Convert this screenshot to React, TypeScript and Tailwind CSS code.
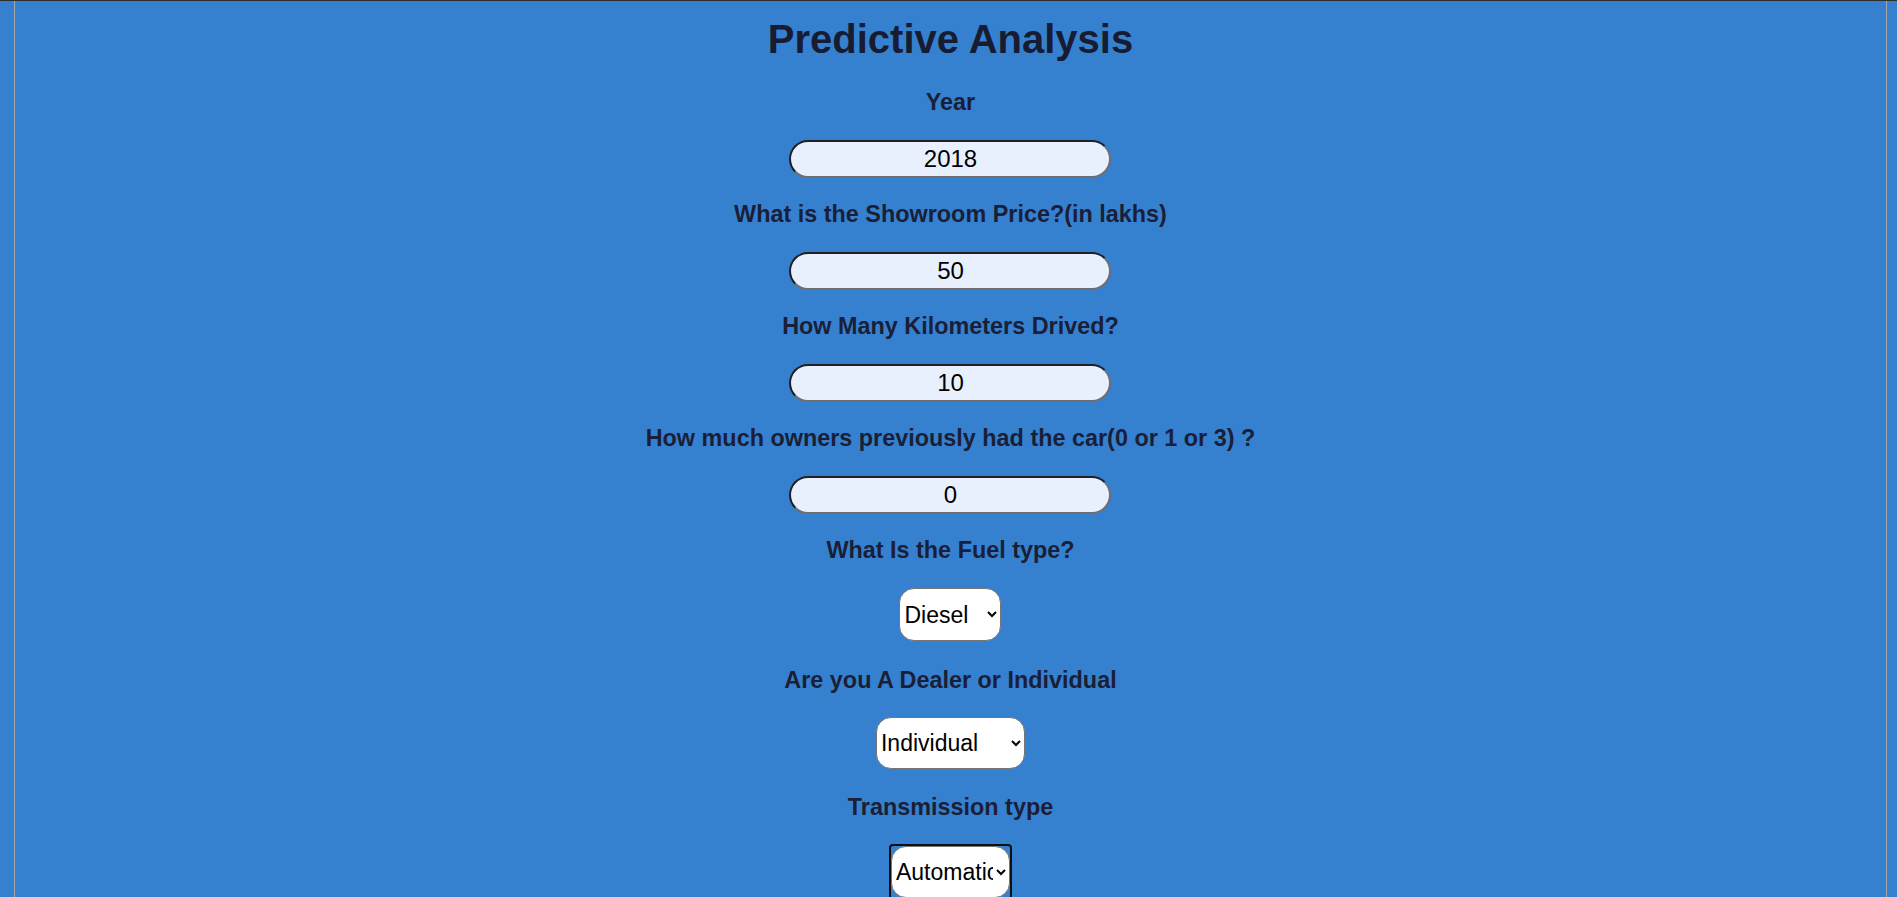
import React from "react";

const font = { fontFamily: '"Liberation Sans", Arial, sans-serif' };

const inputs = [
  { label: "Year", value: "2018" },
  { label: "What is the Showroom Price?(in lakhs)", value: "50" },
  { label: "How Many Kilometers Drived?", value: "10" },
  { label: "How much owners previously had the car(0 or 1 or 3) ?", value: "0" },
];

const Label = ({ children, className = "mt-[22.5px]" }: { children: React.ReactNode; className?: string }) => (
  <label className={`${className} block text-[23.4px] leading-[27px] font-bold text-[#1a1e36]`}>
    {children}
  </label>
);

const App = () => {
  return (
    <div className="min-h-screen bg-[#3581cf] border-t border-[#2e2e2e]" style={font}>
      <div className="ml-[14px] w-[1873px] min-h-[896px] border-x border-[#a8a8a8] flex flex-col items-center pb-10">
        {/* heading */}
        <h1 className="mt-[15px] text-[40px] leading-[46px] font-bold text-[#171c33]">
          Predictive Analysis
        </h1>

        <div className="mt-[4px] flex flex-col items-center">
          {/* number inputs */}
          {inputs.map((item) => (
            <React.Fragment key={item.label}>
              <Label>{item.label}</Label>
              <input
                type="text"
                defaultValue={item.value}
                className="mt-[24.5px] w-[322px] h-[38px] rounded-full border-2 border-t-[#202020] border-l-[#202020] border-b-[#6e6e6e] border-r-[#6e6e6e] bg-[#e8f0fe] text-center text-[24px] text-black outline-none"
                style={font}
              />
            </React.Fragment>
          ))}

          {/* fuel type */}
          <Label>What Is the Fuel type?</Label>
          <select
            defaultValue="Diesel"
            className="mt-[24.5px] w-[102px] h-[53px] rounded-[15px] border border-[#767676] bg-white pl-0 text-[23px] text-black"
            style={font}
          >
            <option>Petrol</option>
            <option>Diesel</option>
            <option>CNG</option>
          </select>

          {/* seller type */}
          <Label className="mt-[25.5px]">Are you A Dealer or Individual</Label>
          <select
            defaultValue="Individual"
            className="mt-[23px] w-[149px] h-[52px] rounded-[15px] border border-[#767676] bg-white pl-0 text-[23px] text-black"
            style={font}
          >
            <option>Dealer</option>
            <option>Individual</option>
          </select>

          {/* transmission */}
          <Label className="mt-[25px]">Transmission type</Label>
          <div className="mt-[23px] rounded-[4px] border-2 border-[#101010]">
            <select
              defaultValue="Automatic"
              className="block w-[119px] h-[52px] rounded-[15px] border border-[#767676] bg-white pl-0 text-[23px] text-black outline-none"
              style={font}
            >
              <option>Manual</option>
              <option>Automatic</option>
            </select>
          </div>
        </div>
      </div>
    </div>
  );
};

export default App;
